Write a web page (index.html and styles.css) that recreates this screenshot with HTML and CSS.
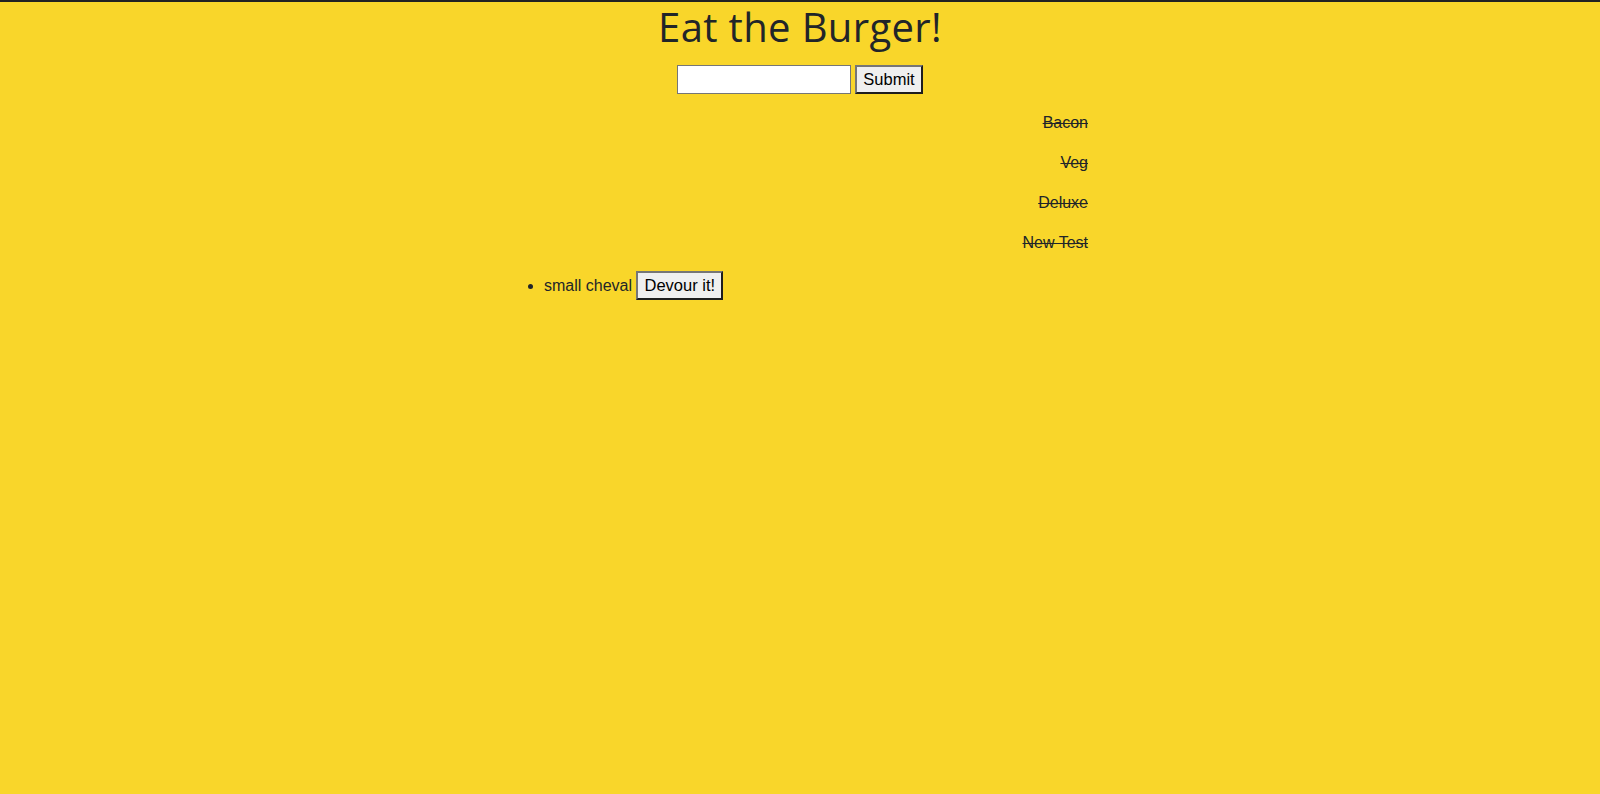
FILE: index.html
```html
<!DOCTYPE html>
<html lang="en">
<head>
<meta charset="utf-8">
<title>Eat the Burger!</title>
<link rel="stylesheet" href="styles.css">
</head>
<body>
  <h1 class="title">Eat the Burger!</h1>
  <form class="add-form">
    <input class="name-input" type="text">
    <button class="btn" type="submit">Submit</button>
  </form>
  <div class="burgers">
    <p class="devoured">Bacon</p>
    <p class="devoured">Veg</p>
    <p class="devoured">Deluxe</p>
    <p class="devoured">New Test</p>
    <ul class="menu">
      <li class="menu-item">small cheval <button class="btn" type="button">Devour it!</button></li>
    </ul>
  </div>
</body>
</html>
```

FILE: styles.css
```css
html, body {
  height: 100%;
}
body {
  margin: 0;
  background: #f9d62a;
  border-top: 2px solid #222222;
  box-sizing: border-box;
  color: #212529;
  font-family: "Liberation Sans", Arial, sans-serif;
  font-size: 16px;
  line-height: 24px;
}
.title {
  margin: 0 0 8px;
  padding-top: 1px;
  text-align: center;
  font-family: "Open Sans", "DejaVu Sans", sans-serif;
  font-weight: 400;
  font-size: 40px;
  letter-spacing: 0.35px;
  line-height: 48px;
  color: #212529;
}
.add-form {
  display: flex;
  justify-content: center;
  align-items: center;
  gap: 4px;
  padding: 6px 0 1px;
}
.name-input {
  box-sizing: border-box;
  width: 174px;
  height: 29px;
  margin: 0;
  border: 1px solid #767676;
  background: #ffffff;
  padding: 1px 2px;
}
.btn {
  box-sizing: border-box;
  height: 29px;
  margin: 0;
  padding: 0 6px;
  font-family: "Liberation Sans", Arial, sans-serif;
  font-size: 16.5px;
  color: #000000;
  background: #efefef;
  border-width: 2px;
  border-style: solid;
  border-color: #767676 #1e1e1e #1e1e1e #767676;
}
.burgers {
  width: 584px;
  margin: 0 auto;
  padding-right: 8px;
}
.devoured {
  margin: 16px 0;
  text-align: right;
  text-decoration: line-through;
}
.menu {
  margin: 16px 0;
  padding-left: 40px;
}
.menu-item {
  line-height: 29px;
}
```
